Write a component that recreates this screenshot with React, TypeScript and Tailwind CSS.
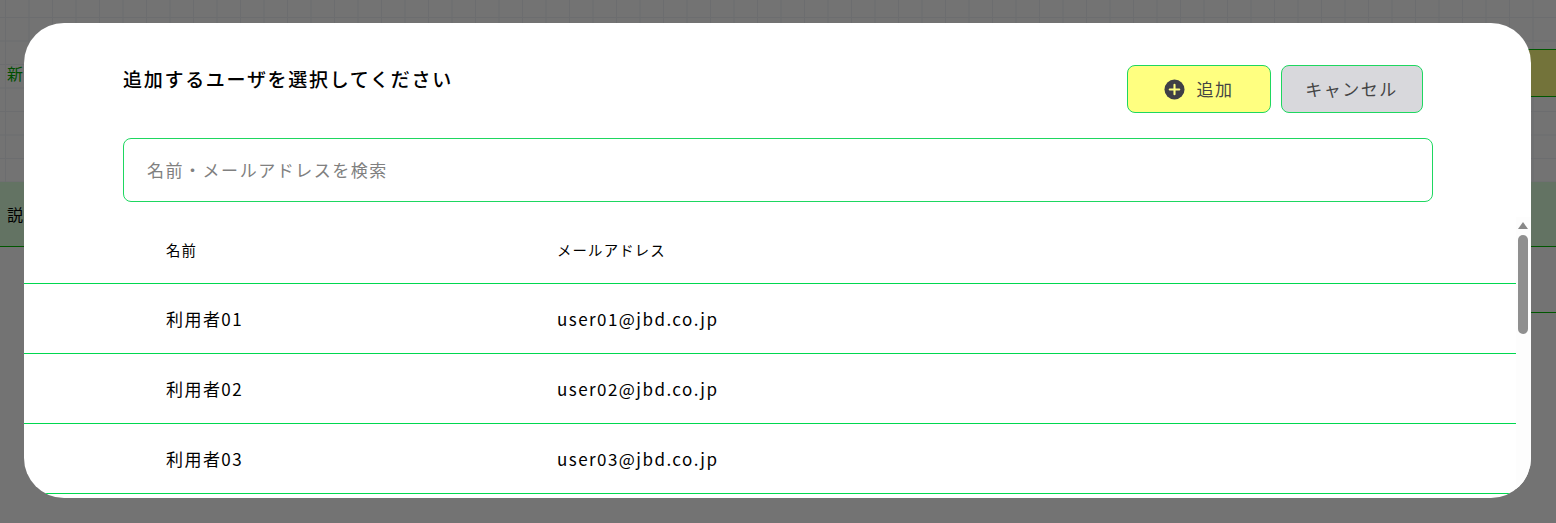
import React from 'react';

const users = [
  { name: '利用者01', email: 'user01@jbd.co.jp' },
  { name: '利用者02', email: 'user02@jbd.co.jp' },
  { name: '利用者03', email: 'user03@jbd.co.jp' },
];

const App = () => {
  return (
    <div className="relative h-[523px] w-[1556px] overflow-hidden bg-white font-['Noto_Sans_CJK_JP','Noto_Sans',sans-serif]">
      {/* Page behind the modal */}
      <div className="h-full">
        <div className="h-[182px] bg-[linear-gradient(#eff2f6_1px,transparent_1px),linear-gradient(90deg,#eff2f6_1px,transparent_1px)] bg-[length:23.5px_23.5px] bg-[position:5px_17px]">
          <div className="h-[49px]" />
          <div className="flex h-[48px] items-center justify-between pl-[7px] text-[16px] text-[#00b000]">
            <span>新</span>
            <div className="h-full w-[30px] border-y border-[#00c000] bg-[#ffff80]" />
          </div>
        </div>
        <div className="flex h-[65px] items-center border-b border-[#00c000] bg-[#dcffdc] pl-[7px] text-[16px] text-black">
          説
        </div>
        <div className="flex h-[66px] justify-end">
          <div className="h-full w-[30px] border-b border-[#00c000]" />
        </div>
      </div>

      {/* Overlay */}
      <div className="absolute inset-0 bg-black/55" />

      {/* Modal */}
      <div className="absolute left-[24px] top-[23px] flex h-[475px] w-[1507px] flex-col overflow-hidden rounded-[40px] bg-white">
        <div className="flex items-start justify-between pl-[99px] pr-[108px]">
          <h2 className="mt-[42px] text-[19px] leading-[28px] font-medium tracking-[0.09em] text-black">
            追加するユーザを選択してください
          </h2>
          <div className="mt-[42px] flex gap-[10px]">
            <button className="flex h-[48px] w-[144px] items-center justify-center gap-[11px] rounded-[8px] border border-[#1ed760] bg-[#ffff80] text-[17px] tracking-[0.09em] text-[#444]">
              <svg viewBox="0 0 22 22" className="h-[21px] w-[21px]">
                <circle cx="11" cy="11" r="10.5" fill="#3f3f46" />
                <path d="M11 6v10M6 11h10" stroke="#ffff80" strokeWidth="2.2" strokeLinecap="round" />
              </svg>
              <span>追加</span>
            </button>
            <button className="h-[48px] w-[142px] rounded-[8px] border border-[#1ed760] bg-[#d8d8dc] pr-[1px] text-[17px] tracking-[0.09em] text-[#444]">
              キャンセル
            </button>
          </div>
        </div>

        <div className="mt-[25px] pl-[99px] pr-[98px]">
          <input
            placeholder="名前・メールアドレスを検索"
            className="h-[64px] w-full rounded-[8px] border border-[#1ed760] bg-white px-[23px] pb-[2px] text-[17px] tracking-[0.09em] outline-none placeholder:text-[#808080]"
          />
        </div>

        <div className="mt-[15px] flex min-h-0 flex-1">
          <div className="min-w-0 flex-1">
            <div className="flex h-[67px] items-center border-b border-[#00d84f] pb-[1px] pl-[142px] text-[14.4px] tracking-[0.08em] text-black">
              <div className="w-[391px]">名前</div>
              <div>メールアドレス</div>
            </div>
            {users.map((u) => (
              <div
                key={u.email}
                className="flex h-[70px] items-center border-b border-[#00d84f] pl-[142px] text-[17px] tracking-[0.085em] text-black"
              >
                <div className="w-[391px]">{u.name}</div>
                <div>{u.email}</div>
              </div>
            ))}
          </div>
          {/* Scrollbar */}
          <div className="flex w-[15px] flex-col bg-[#fdfdfd] pl-[2px]">
            <div className="mt-[5px] h-0 w-0 border-x-[5px] border-b-[7px] border-x-transparent border-b-[#888]" />
            <div className="mt-[6px] h-[99px] w-[10px] rounded-full bg-[#8f8f8f]" />
          </div>
        </div>
      </div>
    </div>
  );
};

export default App;
